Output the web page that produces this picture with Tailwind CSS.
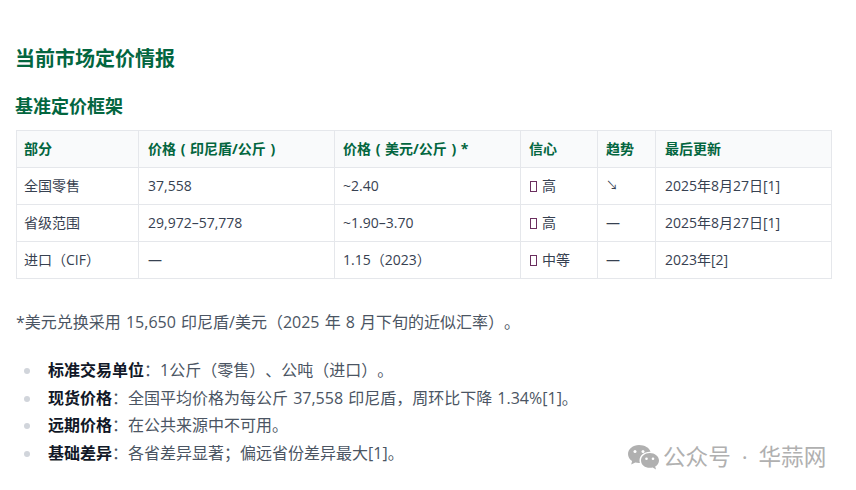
<!DOCTYPE html>
<html lang="zh-CN">
  <head>
    <meta charset="UTF-8" />
    <title>当前市场定价情报</title>
    <script src="https://cdn.jsdelivr.net/npm/@tailwindcss/browser@4"></script>
  </head>
  <body class="relative w-[856px] h-[490px] overflow-hidden bg-white text-[#374151] [text-spacing-trim:space-all] font-['Open_Sans','Noto_Sans_CJK_SC',sans-serif]">

    <main class="px-4 pt-[44px]">
      <h2 class="-ml-px text-[20px] leading-[30px] font-bold text-[#03663f]">当前市场定价情报</h2>
      <h3 class="mt-[19px] -ml-px text-[18px] leading-[27px] font-bold text-[#03663f]">基准定价框架</h3>

      <!-- Table -->
      <table class="mt-[10px] w-[816px] table-fixed border-collapse text-[14px]">
        <colgroup>
          <col class="w-[122px]" /><col class="w-[196px]" /><col class="w-[186px]" /><col class="w-[77px]" /><col class="w-[58px]" /><col />
        </colgroup>
        <thead>
          <tr class="h-[37px] bg-[#f9fafb] text-[#03663f] text-left [word-spacing:1px]">
            <th class="border border-[#e5e7eb] pl-[7px] pr-2 pb-[2px] font-bold">部分</th>
            <th class="border border-[#e5e7eb] pl-[9px] pr-2 pb-[2px] font-bold">价格 ( 印尼盾/公斤 )</th>
            <th class="border border-[#e5e7eb] px-2 pb-[2px] font-bold">价格 ( 美元/公斤 ) *</th>
            <th class="border border-[#e5e7eb] px-2 pb-[2px] font-bold">信心</th>
            <th class="border border-[#e5e7eb] px-2 pb-[2px] font-bold">趋势</th>
            <th class="border border-[#e5e7eb] pl-[9px] pr-2 pb-[2px] font-bold">最后更新</th>
          </tr>
        </thead>
        <tbody>
          <tr class="h-[37px]">
            <td class="border border-[#e5e7eb] pl-[7px] pr-2 pb-[2px]">全国零售</td>
            <td class="border border-[#e5e7eb] pl-[9px] pr-2 pb-[2px]">37,558</td>
            <td class="border border-[#e5e7eb] px-2 pb-[2px]">~2.40</td>
            <td class="border border-[#e5e7eb] px-2 pb-[2px]"><span class="inline-block w-[7px] h-[11px] ml-[1px] mr-[5px] border border-[#6b2f5f] align-[-1px]"></span>高</td>
            <td class="border border-[#e5e7eb] px-2 text-[12px]">↘</td>
            <td class="border border-[#e5e7eb] pl-[9px] pr-2 pb-[2px]">2025年8月27日[1]</td>
          </tr>
          <tr class="h-[37px]">
            <td class="border border-[#e5e7eb] pl-[7px] pr-2 pb-[2px]">省级范围</td>
            <td class="border border-[#e5e7eb] pl-[9px] pr-2 pb-[2px]">29,972–57,778</td>
            <td class="border border-[#e5e7eb] px-2 pb-[2px]">~1.90–3.70</td>
            <td class="border border-[#e5e7eb] px-2 pb-[2px]"><span class="inline-block w-[7px] h-[11px] ml-[1px] mr-[5px] border border-[#6b2f5f] align-[-1px]"></span>高</td>
            <td class="border border-[#e5e7eb] px-2 pb-[2px]">—</td>
            <td class="border border-[#e5e7eb] pl-[9px] pr-2 pb-[2px]">2025年8月27日[1]</td>
          </tr>
          <tr class="h-[37px]">
            <td class="border border-[#e5e7eb] pl-[7px] pr-2 pb-[2px]">进口（CIF）</td>
            <td class="border border-[#e5e7eb] pl-[9px] pr-2 pb-[2px]">—</td>
            <td class="border border-[#e5e7eb] px-2 pb-[2px]">1.15（2023）</td>
            <td class="border border-[#e5e7eb] px-2 pb-[2px]"><span class="inline-block w-[7px] h-[11px] ml-[1px] mr-[5px] border border-[#6b2f5f] align-[-1px]"></span>中等</td>
            <td class="border border-[#e5e7eb] px-2 pb-[2px]">—</td>
            <td class="border border-[#e5e7eb] pl-[9px] pr-2 pb-[2px]">2023年[2]</td>
          </tr>
        </tbody>
      </table>

      <p class="mt-[30px] text-[16px] leading-[26px] text-[#4b5563] [word-spacing:1px]">*美元兑换采用 15,650 印尼盾/美元（2025 年 8 月下旬的近似汇率）。</p>

      <!-- Notes -->
      <ul class="mt-[22px] text-[16px] leading-[27.7px] text-[#4b5563] [word-spacing:1px]">
        <li class="flex items-center"><span class="w-[6px] h-[6px] ml-[8px] mr-[18px] rounded-full bg-[#d1d5db]"></span><span><strong class="font-bold text-[#111827]">标准交易单位</strong>：1公斤（零售）、公吨（进口）。</span></li>
        <li class="flex items-center"><span class="w-[6px] h-[6px] ml-[8px] mr-[18px] rounded-full bg-[#d1d5db]"></span><span><strong class="font-bold text-[#111827]">现货价格</strong>：全国平均价格为每公斤 37,558 印尼盾，周环比下降 1.34%[1]。</span></li>
        <li class="flex items-center"><span class="w-[6px] h-[6px] ml-[8px] mr-[18px] rounded-full bg-[#d1d5db]"></span><span><strong class="font-bold text-[#111827]">远期价格</strong>：在公共来源中不可用。</span></li>
        <li class="flex items-center"><span class="w-[6px] h-[6px] ml-[8px] mr-[18px] rounded-full bg-[#d1d5db]"></span><span><strong class="font-bold text-[#111827]">基础差异</strong>：各省差异显著；偏远省份差异最大[1]。</span></li>
      </ul>
    </main>

    <!-- Watermark -->
    <div class="absolute left-[627px] top-[442px] flex items-center gap-[4px] text-[#b0b0b0] text-[22.6px] leading-[30px] [word-spacing:5px]">
      <svg class="w-[32px] h-[27px]" viewBox="0 0 32 27" fill="#b0b0b0">
        <path d="M12 1C5.9 1 1 5 1 10c0 2.900 1.600 5.400 4.100 7.100L4.200 20.500 8.300 18.500c1.200.3 2.400.5 3.700.5.300 0 .6 0 .9 0-.3-.9-.4-1.700-.4-2.600C12.500 11.500 17 7.700 22.700 7.700c.3 0 .6 0 .8 0C22.400 3.800 17.700 1 12 1z" />
        <circle cx="8" cy="7.500" r="1.500" fill="#fff" />
        <circle cx="16" cy="7.500" r="1.500" fill="#fff" />
        <path d="M22.800 9C17.900 9 14 12.300 14 16.400s3.900 7.400 8.800 7.400c1 0 2-.1 2.900-.4l3.300 2-.8-2.900c2.300-1.400 3.800-3.600 3.800-6.100C32 12.300 27.700 9 22.800 9z" />
        <circle cx="19.500" cy="14.800" r="1.300" fill="#fff" />
        <circle cx="26" cy="14.800" r="1.300" fill="#fff" />
      </svg>
      <span>公众号 · 华蒜网</span>
    </div>
  </body>
</html>
